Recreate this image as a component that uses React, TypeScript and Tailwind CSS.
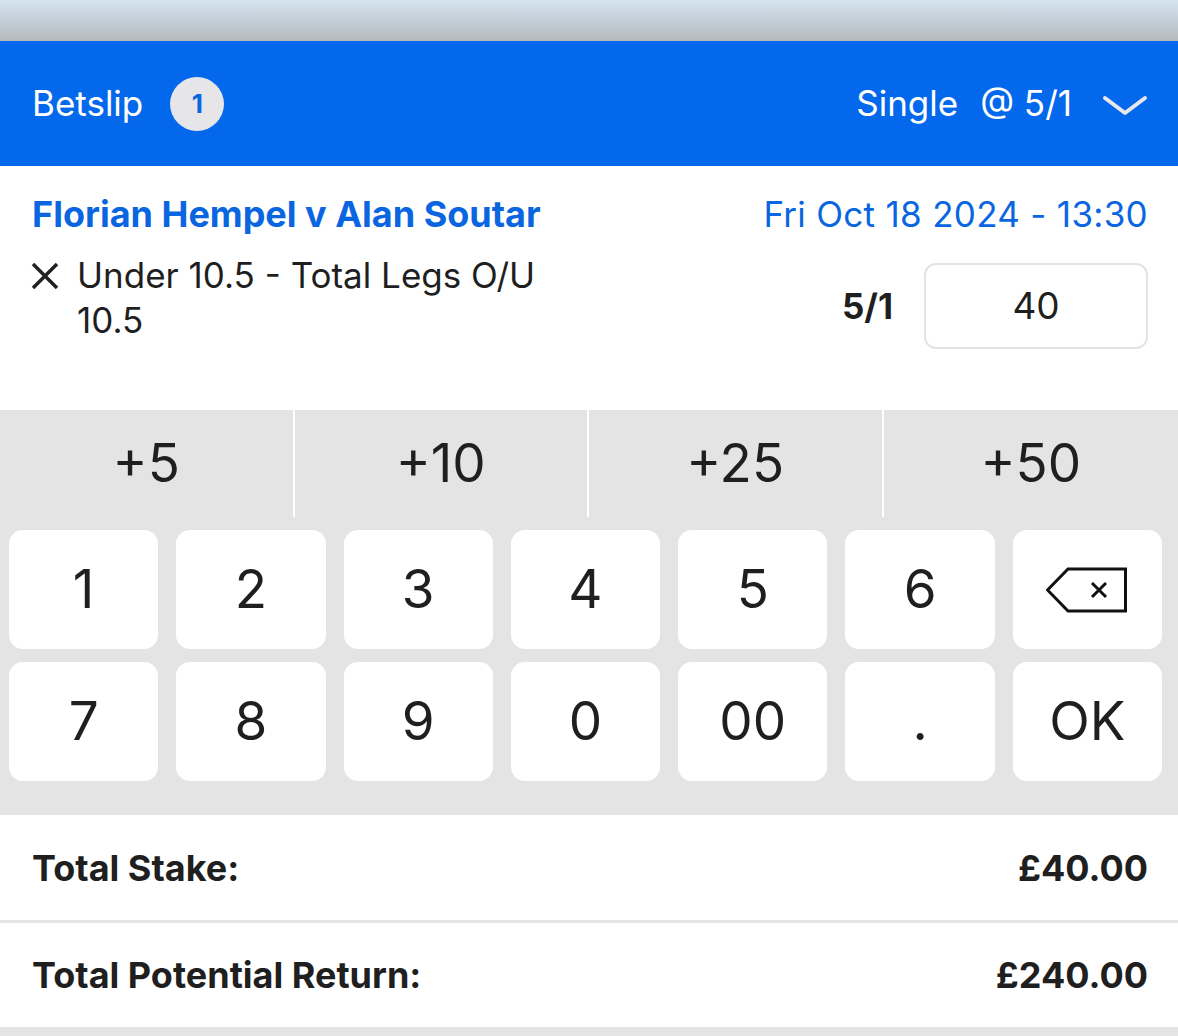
import React from 'react'

const font = { fontFamily: 'Inter, "Noto Sans", sans-serif' }

const quick = ['+5', '+10', '+25', '+50']
const keys = ['1', '2', '3', '4', '5', '6', 'back', '7', '8', '9', '0', '00', '.', 'OK']

function Backspace() {
  return (
    <svg width="82" height="46" viewBox="0 0 82 46" fill="none">
      <path d="M1.5 23 L22 2 H79.5 V44 H22 Z" stroke="#111" strokeWidth="3" strokeLinejoin="miter" />
      <path d="M46 16 L60 30 M60 16 L46 30" stroke="#111" strokeWidth="3" />
    </svg>
  )
}

export default function App() {
  return (
    <div className="w-[1178px] h-[1036px] overflow-hidden bg-white text-[#1f1f1f]" style={font}>
      <div className="h-[41px] bg-gradient-to-b from-[#d6e4ef] via-[#c3ced8] to-[#b5b9bd]" />

      <header className="h-[125px] bg-[#0468ec] flex items-center justify-between pl-8 pr-[30px] text-white">
        <div className="flex items-center gap-[27px]">
          <span className="text-[35px]">Betslip</span>
          <span className="w-[54px] h-[54px] rounded-full bg-[#e6e6e8] text-[#0a66e0] font-bold text-[26px] flex items-center justify-center">
            1
          </span>
        </div>
        <div className="flex items-center">
          <span className="text-[35px] mr-[22px]">Single</span>
          <span className="text-[35px]">@ 5/1</span>
          <svg width="46" height="22" viewBox="0 0 46 22" className="ml-[30px] mt-1">
            <path d="M3 3 L23 18 L43 3" stroke="#e8e8ec" strokeWidth="4" fill="none" strokeLinecap="round" strokeLinejoin="round" />
          </svg>
        </div>
      </header>

      <section className="h-[244px] pl-8 pr-[30px] pt-[25px]">
        <div className="flex items-start justify-between">
          <span className="text-[#0a66e0] font-bold text-[36px] leading-[46px]">Florian Hempel v Alan Soutar</span>
          <span className="text-[#0a66e0] text-[35px] leading-[46px] tracking-[0.3px]">Fri Oct 18 2024 - 13:30</span>
        </div>
        <div className="flex items-start justify-between mt-[16px]">
          <div className="flex items-start">
            <svg width="30" height="30" viewBox="0 0 30 30" className="-ml-[2px] mt-[8px] mr-[17px] shrink-0">
              <path d="M3 3 L27 27 M27 3 L3 27" stroke="#222" strokeWidth="3.5" />
            </svg>
            <span className="text-[35px] leading-[45px] w-[480px]">Under 10.5 - Total Legs O/U 10.5</span>
          </div>
          <div className="flex items-center mt-[10px]">
            <span className="font-bold text-[35px] mr-[31px]">5/1</span>
            <div className="w-[224px] h-[86px] rounded-[12px] border-2 border-[#e3e3e3] flex items-center justify-center text-[37px]">
              40
            </div>
          </div>
        </div>
      </section>

      <section className="bg-[#e4e4e4] pb-[34px]">
        <div className="grid grid-cols-4 h-[107px]">
          {quick.map((q, i) => (
            <div
              key={q}
              className={`flex items-center justify-center text-[53px] ${i < 3 ? 'border-r-2 border-white' : ''}`}
            >
              {q}
            </div>
          ))}
        </div>
        <div className="grid grid-cols-7 gap-x-[18px] gap-y-[13px] px-[9px] pt-[13px] pr-[16px]">
          {keys.map((k) => (
            <div key={k} className="h-[119px] bg-white rounded-[14px] flex items-center justify-center text-[53px]">
              {k === 'back' ? <Backspace /> : k}
            </div>
          ))}
        </div>
      </section>

      <div className="h-[105px] flex items-center justify-between pl-8 pr-[30px] font-bold text-[36px]">
        <span>Total Stake:</span>
        <span>£40.00</span>
      </div>
      <div className="h-[3px] bg-[#e4e4e4]" />
      <div className="h-[104px] flex items-center justify-between pl-8 pr-[30px] font-bold text-[36px]">
        <span>Total Potential Return:</span>
        <span>£240.00</span>
      </div>
      <div className="h-[10px] bg-[#e4e4e4]" />
    </div>
  )
}
